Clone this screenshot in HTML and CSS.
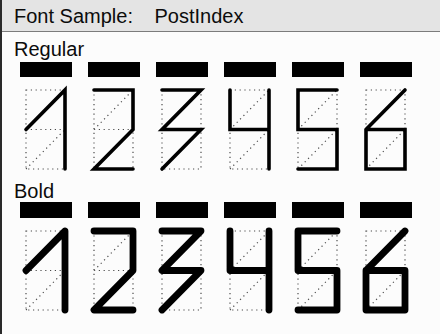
FILE: index.html
```html
<!DOCTYPE html>
<html lang="en">
<head>
    <meta charset="UTF-8">
    <meta name="viewport" content="width=device-width, initial-scale=1.0">
    <title>Font Sample: PostIndex</title>
    <link rel="stylesheet" href="styles.css">
</head>
<body>
    <svg class="defs" width="0" height="0">
        <defs>
            <path id="grid" d="M6 13H45V92H6Z M6 52.5H45 M6 52.5L45 13 M6 92L45 52.5"/>
            <path id="d1" d="M6 52.5L45 13V92"/>
            <path id="d2" d="M6 13H45V52.5L6 92H45"/>
            <path id="d3" d="M6 13H45L6 52.5H45L6 92"/>
            <path id="d4" d="M6 13V52.5H45 M45 13V92"/>
            <path id="d5" d="M45 13H6V52.5H45V92H6"/>
            <path id="d6" d="M45 13L6 52.5V92H45V52.5H6"/>
        </defs>
    </svg>
    <div class="window">
        <div class="header">Font Sample: <span class="font-name">PostIndex</span></div>
        <div class="section regular">
            <div class="label">Regular</div>
            <div class="digits">
                <div class="cell"><div class="bar"></div><svg class="glyph" viewBox="0 0 52 96"><use class="grid" href="#grid"/><use class="stroke" href="#d1"/></svg></div>
                <div class="cell"><div class="bar"></div><svg class="glyph" viewBox="0 0 52 96"><use class="grid" href="#grid"/><use class="stroke" href="#d2"/></svg></div>
                <div class="cell"><div class="bar"></div><svg class="glyph" viewBox="0 0 52 96"><use class="grid" href="#grid"/><use class="stroke" href="#d3"/></svg></div>
                <div class="cell"><div class="bar"></div><svg class="glyph" viewBox="0 0 52 96"><use class="grid" href="#grid"/><use class="stroke" href="#d4"/></svg></div>
                <div class="cell"><div class="bar"></div><svg class="glyph" viewBox="0 0 52 96"><use class="grid" href="#grid"/><use class="stroke" href="#d5"/></svg></div>
                <div class="cell"><div class="bar"></div><svg class="glyph" viewBox="0 0 52 96"><use class="grid" href="#grid"/><use class="stroke" href="#d6"/></svg></div>
            </div>
        </div>
        <div class="section bold">
            <div class="label">Bold</div>
            <div class="digits">
                <div class="cell"><div class="bar"></div><svg class="glyph" viewBox="0 0 52 96"><use class="grid" href="#grid"/><use class="stroke" href="#d1"/></svg></div>
                <div class="cell"><div class="bar"></div><svg class="glyph" viewBox="0 0 52 96"><use class="grid" href="#grid"/><use class="stroke" href="#d2"/></svg></div>
                <div class="cell"><div class="bar"></div><svg class="glyph" viewBox="0 0 52 96"><use class="grid" href="#grid"/><use class="stroke" href="#d3"/></svg></div>
                <div class="cell"><div class="bar"></div><svg class="glyph" viewBox="0 0 52 96"><use class="grid" href="#grid"/><use class="stroke" href="#d4"/></svg></div>
                <div class="cell"><div class="bar"></div><svg class="glyph" viewBox="0 0 52 96"><use class="grid" href="#grid"/><use class="stroke" href="#d5"/></svg></div>
                <div class="cell"><div class="bar"></div><svg class="glyph" viewBox="0 0 52 96"><use class="grid" href="#grid"/><use class="stroke" href="#d6"/></svg></div>
            </div>
        </div>
    </div>
</body>
</html>
```

FILE: styles.css
```css
* { margin: 0; padding: 0; box-sizing: border-box; }
body { width: 440px; height: 334px; overflow: hidden; background: #fcfcfc; font-family: "Liberation Sans", Arial, sans-serif; color: #0c0c0c; }
.defs { position: absolute; }
.window { height: 334px; border-left: 2px solid #2a2a2a; }
.header { height: 32px; padding: 5px 0 0 12px; background: #e4e4e4; border-bottom: 1px solid #7c7c7c; font-size: 20px; line-height: 23px; }
.font-name { margin-left: 16px; }
.label { padding-left: 12px; font-size: 20px; line-height: 23px; }
.regular { margin-top: 6px; }
.regular .label { margin-bottom: 1px; }
.bold { margin-top: 7px; }
.bold .label { margin-bottom: -1px; }
.digits { display: flex; gap: 16px; padding-left: 18px; }
.cell { display: flex; flex-direction: column; width: 52px; }
.bar { height: 15px; background: #000; }
.bold .bar { height: 16px; }
.glyph { display: block; width: 52px; height: 96px; }
.grid { fill: none; stroke: #4a4a4a; stroke-width: 1.2; stroke-dasharray: 1.2 3.6; }
.stroke { fill: none; stroke: #000; }
.regular .stroke { stroke-width: 3.6; stroke-linecap: round; stroke-linejoin: miter; }
.bold .stroke { stroke-width: 6.8; stroke-linecap: round; stroke-linejoin: round; }
```
